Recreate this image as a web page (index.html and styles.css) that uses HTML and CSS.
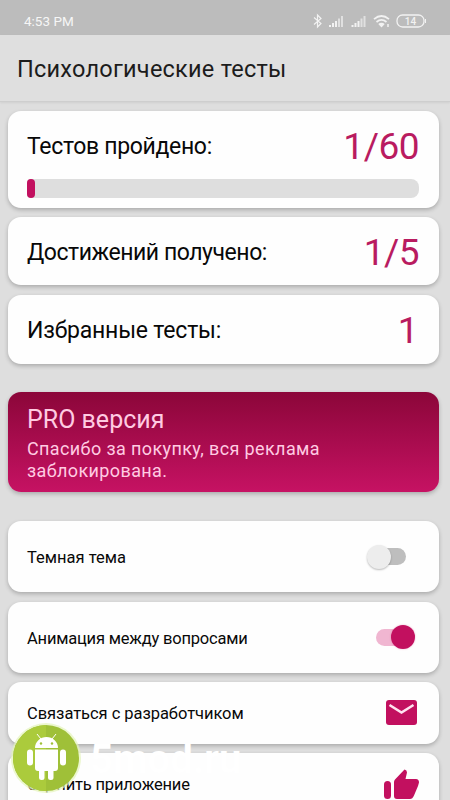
FILE: index.html
```html
<!DOCTYPE html>
<html lang="ru">
<head>
<meta charset="utf-8">
<title>Психологические тесты</title>
<link rel="stylesheet" href="styles.css">
</head>
<body>
<div class="screen">
  <header class="status">
    <span class="time">4:53 PM</span>
    <svg class="status-icons" width="116" height="16" viewBox="0 0 116 16" fill="none">
      <path d="M1 4.500l7 6-3.500 3.500V2l3.500 3.500-7 6" stroke="#f2f2f2" stroke-width="1.200"/>
      <g fill="#f2f2f2"><path d="M16 12h2v2h-2zM19 10h2v4h-2zM22 8h2v6h-2zM38.500 12h2v2h-2zM41.500 10h2v4h-2zM44.500 8h2v6h-2z"/><path opacity=".65" d="M25 5.500h2V14h-2zM28 3h2v11h-2zM47.500 5.500h2V14h-2zM50.500 3h2v11h-2z"/></g>
      <path d="M61 6.200q7.500-6.400 15 0M63.500 9q5-4.300 10 0" stroke="#f2f2f2" stroke-width="1.700"/>
      <path d="M65.300 11q3.200-2.600 6.400 0L68.500 14.500z" fill="#f2f2f2"/><path d="M75 11v3" stroke="#f2f2f2" stroke-width="1.500"/>
      <rect x="84" y="2" width="27" height="12" rx="5.500" stroke="#f2f2f2" stroke-width="1.300"/>
      <path d="M112.500 6v4" stroke="#f2f2f2"/>
      <text x="97.500" y="11.500" text-anchor="middle" class="battery">14</text>
    </svg>
  </header>
  <h1 class="title"><span>Психологические тесты</span></h1>
  <main class="list">
    <section class="card progress-card">
      <div class="row"><span class="label l1">Тестов пройдено:</span><b class="num">1/60</b></div>
      <div class="bar"><div class="fill"></div></div>
    </section>
    <section class="card stat"><span class="label l2">Достижений получено:</span><b class="num">1/5</b></section>
    <section class="card stat fav"><span class="label l3">Избранные тесты:</span><b class="num single">1</b></section>
    <section class="card pro">
      <h2>PRO версия</h2>
      <p>Спасибо за покупку, вся реклама<br>заблокирована.</p>
    </section>
    <section class="card setting"><span>Темная тема</span><i class="switch"></i></section>
    <section class="card setting anim"><span>Анимация между вопросами</span><i class="switch on"></i></section>
    <section class="card setting contact"><span>Связаться с разработчиком</span>
      <svg class="mail" width="31" height="25" viewBox="0 0 31 25"><rect width="31" height="25" rx="3" fill="#c2105f"/><path d="M3.500 5l12 7.500 12-7.500" fill="none" stroke="#ffe3f0" stroke-width="2.600"/></svg>
    </section>
    <section class="card setting rate"><span>Оценить приложение</span>
      <svg class="thumb" width="35" height="31" viewBox="0 0 35 31" fill="#c2105f"><rect y="12" width="7" height="18" rx="3.500"/><path d="M10 13q0-1.500 1-2.500L20.500.600q2.500.500 2.500 3L21.500 10H32q3 0 3 3.500l-1 3.500-4 9.500Q28.500 30 26 30H13q-3 0-3-3z"/></svg>
    </section>
  </main>
  <div class="watermark">
    <svg width="74" height="74" viewBox="0 0 74 74">
      <circle cx="37" cy="37" r="35" fill="#e4f3bb" opacity=".7"/>
      <circle cx="37" cy="37" r="33" fill="#9fc038"/>
      <path d="M37 4a33 33 0 0 0 0 66z" fill="#abcb3c"/>
      <g fill="#fff"><path d="M26 27a11.500 11 0 0 1 23 0zM26 28.500h23V47q0 3-3 3H29q-3 0-3-3z"/><rect x="18" y="28.500" width="6" height="16" rx="3"/><rect x="51" y="28.500" width="6" height="16" rx="3"/><rect x="30" y="45" width="5.500" height="14" rx="2.500"/><rect x="39" y="45" width="5.500" height="14" rx="2.500"/></g>
      <path d="M32 18l-4-5M43 18l4-5" stroke="#fff" stroke-width="1"/>
      <g fill="#9fc038"><circle cx="32" cy="22.500" r="1.200"/><circle cx="43" cy="22.500" r="1.200"/></g>
    </svg>
    <span>5mod.ru</span>
  </div>
</div>
</body>
</html>
```
FILE: styles.css
```css
* { box-sizing: border-box; margin: 0; }
body { background: #dedede; font-family: Roboto, sans-serif; color: #111; }
.screen { position: relative; width: 450px; height: 800px; overflow: hidden; }
.status { height: 35px; background: #bcbcbc; padding: 6px 23px 0 24px; display: flex; align-items: center; justify-content: space-between; }
.time { color: #f6f6f6; font-size: 13.5px; }
.status-icons { margin-right: -2px; flex: none; }
.battery { font: 500 10px Roboto, sans-serif; fill: #f2f2f2; }
.title { height: 67px; padding: 2px 17px 0; display: flex; align-items: center; font-size: 23.5px; font-weight: 400; letter-spacing: .24px; white-space: nowrap; background: #dfdfdf; border-bottom: 1px solid #cecece; box-shadow: 0 1px 2px #0001; color: #1c1c1c; }
.list { padding: 9px 11px 0 8px; display: flex; flex-direction: column; }
.card { flex: none; background: #fefefe; border-radius: 13px; padding: 0 20px 0 19px; box-shadow: 0 2px 4px rgba(0,0,0,.23); margin-bottom: 9.500px; white-space: nowrap; }
.progress-card { height: 96.500px; }
.row { height: 68px; padding-top: 3px; display: flex; justify-content: space-between; align-items: center; }
.label { font-size: 23px; color: #080808; }
.l1 { letter-spacing: -.32px; }
.l2 { letter-spacing: -.45px; }
.l3 { letter-spacing: -.2px; }
.num { font-size: 37px; font-weight: 400; color: #b91b60; letter-spacing: -.5px; }
.single { margin-right: 1px; }
.bar { height: 19px; background: #dedede; border-radius: 4px 8px 8px 4px; }
.fill { width: 8px; height: 19px; background: #c2105f; border-radius: 4px; }
.stat { height: 68px; display: flex; align-items: center; justify-content: space-between; padding-top: 2px; }
.fav { height: 69.500px; margin-bottom: 28px; }
.pro { height: 100px; margin-bottom: 29px; background: linear-gradient(#8b0639, #c61263); color: #ffcbe2; padding-top: 13px; }
.pro h2 { font-size: 25px; font-weight: 400; line-height: 30px; }
.pro p { font-size: 18px; line-height: 22px; padding-top: 3px; letter-spacing: .38px; }
.setting { height: 71px; display: flex; align-items: center; justify-content: space-between; font-size: 16.500px; color: #090909; padding-top: 2px; }
.switch { position: relative; width: 31px; height: 17px; border-radius: 9px; background: #bebebe; margin: -2px 13px 0 0; }
.switch::before { content: ""; position: absolute; width: 24px; height: 24px; border-radius: 50%; background: #ededed; left: -8px; top: -3px; box-shadow: 0 1px 2px #0004; }
.switch.on { background: #f0b6d1; margin-right: 12px; }
.switch.on::before { left: 15px; top: -4px; background: #c2105f; box-shadow: 0 0 2px #c2105f55; }
.anim { height: 71.500px; margin-bottom: 9px; }
.anim > span { letter-spacing: -.2px; }
.contact { height: 61.500px; padding-top: 2px; }
.contact > span { letter-spacing: -.05px; }
.mail { margin: -2px 2px 0 0; }
.rate { height: 62px; padding-top: 1px; }
.rate > span { letter-spacing: -.18px; }
.thumb { margin-top: -1px; }
.watermark { position: absolute; left: 9px; top: 721px; display: flex; color: #fff; }
.watermark span { font-size: 40px; font-weight: 700; line-height: 46px; margin: 16px 0 0 7px; }
```
